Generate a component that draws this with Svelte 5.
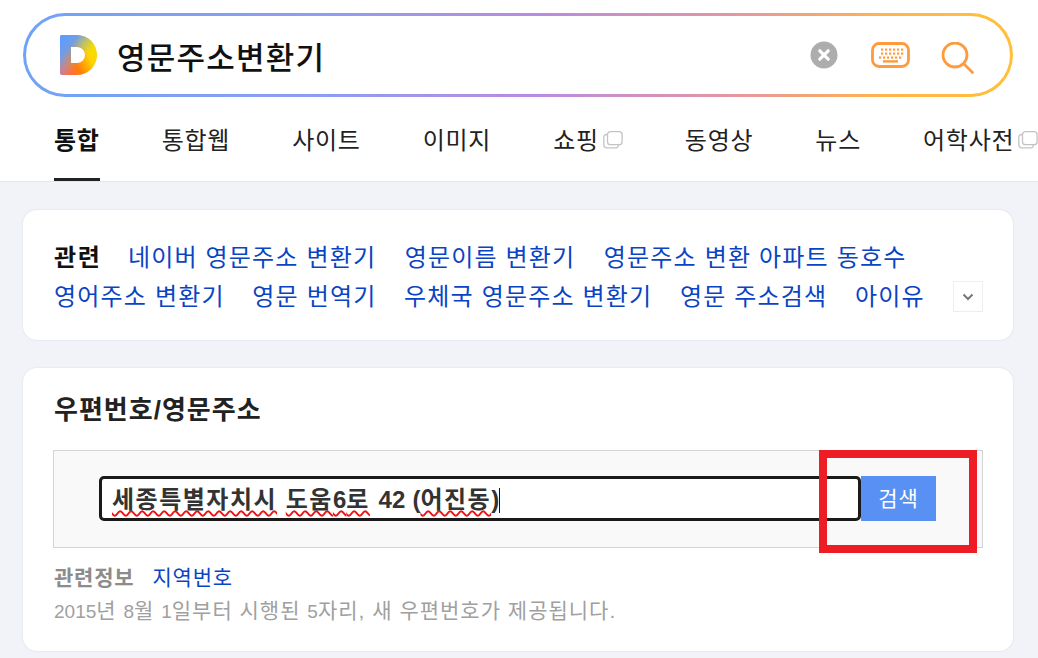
<script>
  const tabs = [
    { label: '통합', active: true },
    { label: '통합웹' },
    { label: '사이트' },
    { label: '이미지' },
    { label: '쇼핑', copy: true },
    { label: '동영상' },
    { label: '뉴스' },
    { label: '어학사전', copy: true }
  ];
  const relatedOne = ['네이버 영문주소 변환기', '영문이름 변환기', '영문주소 변환 아파트 동호수'];
  const relatedTwo = ['영어주소 변환기', '영문 번역기', '우체국 영문주소 변환기', '영문 주소검색', '아이유'];
  const keyRows = [
    { y: 7.5, xs: [10, 14, 18, 22, 26, 30] },
    { y: 11.5, xs: [10, 14, 18, 22, 26, 30] },
    { y: 15.5, xs: [8, 12, 16, 20, 24, 28] }
  ];
</script>

<div class="page">
  <header class="head">
    <div class="searchbar">
      <svg class="logo" width="38" height="40" viewBox="0 0 38 40">
        <defs>
          <linearGradient id="lgBase" x1="0" y1="1" x2="1" y2="0.45">
            <stop offset="0" stop-color="#ff5c78" />
            <stop offset="0.45" stop-color="#ff7d0a" />
            <stop offset="0.8" stop-color="#ffd400" />
            <stop offset="1" stop-color="#f5dc00" />
          </linearGradient>
          <linearGradient id="lgBlue" x1="0.05" y1="0.1" x2="0.62" y2="0.62">
            <stop offset="0" stop-color="#5c9dff" />
            <stop offset="0.35" stop-color="#6a9df0" stop-opacity="0.95" />
            <stop offset="1" stop-color="#8fb5c0" stop-opacity="0" />
          </linearGradient>
        </defs>
        <path fill="url(#lgBase)" fill-rule="evenodd" d="M2 0H17a20 20 0 0 1 0 40H2a2 2 0 0 1-2-2V2a2 2 0 0 1 2-2zM11 12v16h6a8 8 0 0 0 0-16z" />
        <path fill="url(#lgBlue)" fill-rule="evenodd" d="M2 0H17a20 20 0 0 1 0 40H2a2 2 0 0 1-2-2V2a2 2 0 0 1 2-2zM11 12v16h6a8 8 0 0 0 0-16z" />
      </svg>
      <div class="query">영문주소변환기</div>
      <svg class="clear" width="28" height="28" viewBox="0 0 28 28">
        <circle cx="14" cy="14" r="13.5" fill="#adadad" />
        <path d="M9.8 9.8l8.4 8.4M18.2 9.8l-8.4 8.4" stroke="#fff" stroke-width="3.2" stroke-linecap="round" />
      </svg>
      <svg class="keys" width="39" height="26" viewBox="0 0 39 26">
        <rect x="1.5" y="1.5" width="36" height="23" rx="6.5" fill="none" stroke="#ff9a3d" stroke-width="2.8" />
        {#each keyRows as row}
          {#each row.xs as x}
            <rect x={x} y={row.y - 1} width="2.2" height="2.2" fill="#ff9a3d" />
          {/each}
        {/each}
        <rect x="12" y="18.2" width="15" height="2.4" fill="#ff9a3d" />
      </svg>
      <svg class="mag" width="33" height="32" viewBox="0 0 33 32">
        <circle cx="14" cy="13" r="12" fill="none" stroke="#ff9a3d" stroke-width="2.8" />
        <path d="M23 22l8.5 8.5" stroke="#ff9a3d" stroke-width="2.8" stroke-linecap="round" />
      </svg>
    </div>
    <nav class="tabs">
      {#each tabs as t}
        <div class="tab" class:active={t.active}>
          <span>{t.label}</span>
          {#if t.copy}
            <svg class="copy" width="20" height="18" viewBox="0 0 20 18">
              <rect x="4.5" y="0.7" width="14.6" height="13" rx="3" fill="none" stroke="#c4c4c4" stroke-width="1.3" />
              <path d="M4.5 3.5H3.5a2.7 2.7 0 0 0-2.7 2.7v7.6a3 3 0 0 0 3 3h9a2.5 2.5 0 0 0 2.6-2.8" fill="none" stroke="#c4c4c4" stroke-width="1.3" />
            </svg>
          {/if}
        </div>
      {/each}
    </nav>
  </header>

  <main class="content">
    <section class="card related">
      <div class="relrow">
        <strong class="reltitle">관련</strong>
        {#each relatedOne as r}<span class="link">{r}</span>{/each}
      </div>
      <div class="relrow second">
        {#each relatedTwo as r}<span class="link">{r}</span>{/each}
      </div>
      <div class="more">
        <svg width="12" height="8" viewBox="0 0 12 8"><path d="M1.5 1.5L6 6l4.5-4.5" fill="none" stroke="#777" stroke-width="2" /></svg>
      </div>
    </section>

    <section class="card postal">
      <h2>우편번호/영문주소</h2>
      <div class="formbox">
        <div class="field">
          <span class="spell">세종특별자치시</span> <span class="spell">도움<span class="lat">6</span>로</span> <span class="lat">42 (</span><span class="spell">어진동</span><span class="lat">)</span><span class="caret"></span>
        </div>
        <div class="btn">검색</div>
        <div class="redbox"></div>
      </div>
      <div class="info">
        <span class="infolabel">관련정보</span><span class="infolink">지역번호</span>
      </div>
      <p class="note"><span class="num">2015</span>년 <span class="num">8</span>월 <span class="num">1</span>일부터 시행된 <span class="num">5</span>자리, 새 우편번호가 제공됩니다.</p>
    </section>
  </main>
</div>

<style>
  :global(body) {
    margin: 0;
    background: #f1f3f8;
  }
  .page {
    width: 1038px;
    height: 658px;
    overflow: hidden;
    font-family: "Liberation Sans", "Noto Sans CJK KR", sans-serif;
    color: #111;
  }
  .head {
    background: #fff;
    height: 181px;
    border-bottom: 1px solid #e6e7ea;
    overflow: hidden;
  }
  .searchbar {
    margin: 13px 0 0 23px;
    width: 990px;
    height: 84px;
    box-sizing: border-box;
    border: 3px solid transparent;
    border-radius: 42px;
    background:
      linear-gradient(#fff, #fff) padding-box,
      linear-gradient(90deg, #6fa3f7 0%, #8f9df0 30%, #b98be0 52%, #e596a0 72%, #ffb648 88%, #ffc03a 100%) border-box;
    display: flex;
    align-items: center;
    padding-left: 34px;
  }
  .logo {
    flex: none;
  }
  .query {
    margin-left: 19px;
    font-size: 31px;
    font-weight: 500;
    letter-spacing: 1.25px;
    flex: 1;
    color: #111;
  }
  .clear {
    flex: none;
    margin-right: 33px;
  }
  .keys {
    flex: none;
    margin-right: 31px;
  }
  .mag {
    flex: none;
    margin-right: 36px;
    margin-top: 6px;
  }
  .tabs {
    display: flex;
    gap: 62px;
    padding-left: 54px;
    height: 84px;
    white-space: nowrap;
  }
  .tab {
    display: flex;
    align-items: center;
    height: 84px;
    box-sizing: border-box;
    font-size: 24px;
    letter-spacing: 0.75px;
    color: #222;
    padding-bottom: 1px;
    flex: none;
  }
  .tab.active {
    font-weight: 700;
    color: #111;
    border-bottom: 3px solid #222;
    padding-bottom: 0;
    padding-top: 1px;
  }
  .copy {
    margin-left: 4px;
    margin-top: 3px;
  }
  .content {
    padding: 28px 25px 0 23px;
    display: flex;
    flex-direction: column;
    gap: 28px;
  }
  .card {
    background: #fff;
    border-radius: 14px;
    box-shadow: 0 0 2px rgba(0, 0, 0, 0.12);
    width: 990px;
    box-sizing: border-box;
    padding: 0 30px 0 31px;
  }
  .related {
    position: relative;
    height: 130px;
    padding-top: 26px;
  }
  .relrow {
    display: flex;
    gap: 28.5px;
    align-items: center;
    height: 39px;
    white-space: nowrap;
    font-size: 24px;
  }
  .relrow.second {
    gap: 27.6px;
  }
  .reltitle {
    font-weight: 700;
    letter-spacing: 1.6px;
    margin-right: -2px;
    color: #111;
  }
  .link {
    color: #0a44c4;
    letter-spacing: 1.18px;
  }
  .more {
    position: absolute;
    right: 30px;
    top: 71px;
    width: 30px;
    height: 31px;
    box-sizing: border-box;
    border: 1px solid #eee;
    display: flex;
    align-items: center;
    justify-content: center;
  }
  .postal {
    height: 283px;
    padding-top: 24px;
  }
  h2 {
    margin: 0;
    font-size: 26px;
    line-height: 36px;
    font-weight: 700;
    color: #222;
    letter-spacing: 1px;
  }
  .formbox {
    position: relative;
    margin: 22px 0 0 -1px;
    width: 930px;
    height: 98px;
    box-sizing: border-box;
    background: #f9f9f9;
    border: 1px solid #d4d4d4;
    display: flex;
    align-items: center;
    padding: 0 0 1px 45px;
  }
  .field {
    width: 762px;
    height: 45px;
    box-sizing: border-box;
    background: #fff;
    border: 3px solid #1a1a1a;
    border-radius: 5px;
    padding-left: 10px;
    font-size: 24px;
    font-weight: 700;
    line-height: 41px;
    color: #333;
    white-space: pre-wrap;
    letter-spacing: 1.5px;
    word-spacing: 0.5px;
  }
  .lat {
    letter-spacing: 0;
  }
  .spell {
    text-decoration: underline wavy #f01010 1.5px;
    text-underline-offset: 2px;
  }
  .caret {
    display: inline-block;
    width: 1px;
    height: 25px;
    background: #111;
    vertical-align: -5px;
  }
  .btn {
    width: 75px;
    height: 45px;
    background: #5890f3;
    color: #fff;
    font-size: 21px;
    display: flex;
    align-items: center;
    justify-content: center;
    letter-spacing: 1px;
    box-sizing: border-box;
    padding-bottom: 3px;
  }
  .redbox {
    position: absolute;
    left: 765px;
    top: -1px;
    width: 158px;
    height: 103px;
    box-sizing: border-box;
    border: 8px solid #ee1c25;
  }
  .info {
    margin-top: 16px;
    font-size: 21px;
    line-height: 28px;
    display: flex;
    gap: 18px;
    letter-spacing: 0.8px;
  }
  .infolabel {
    color: #8c8c8c;
    font-weight: 700;
  }
  .infolink {
    color: #0a44c4;
  }
  .note {
    margin: 5px 0 0;
    font-size: 21px;
    line-height: 28px;
    color: #a0a0a0;
    letter-spacing: 1px;
  }
  .num {
    font-size: 19px;
    letter-spacing: 0;
  }
</style>
